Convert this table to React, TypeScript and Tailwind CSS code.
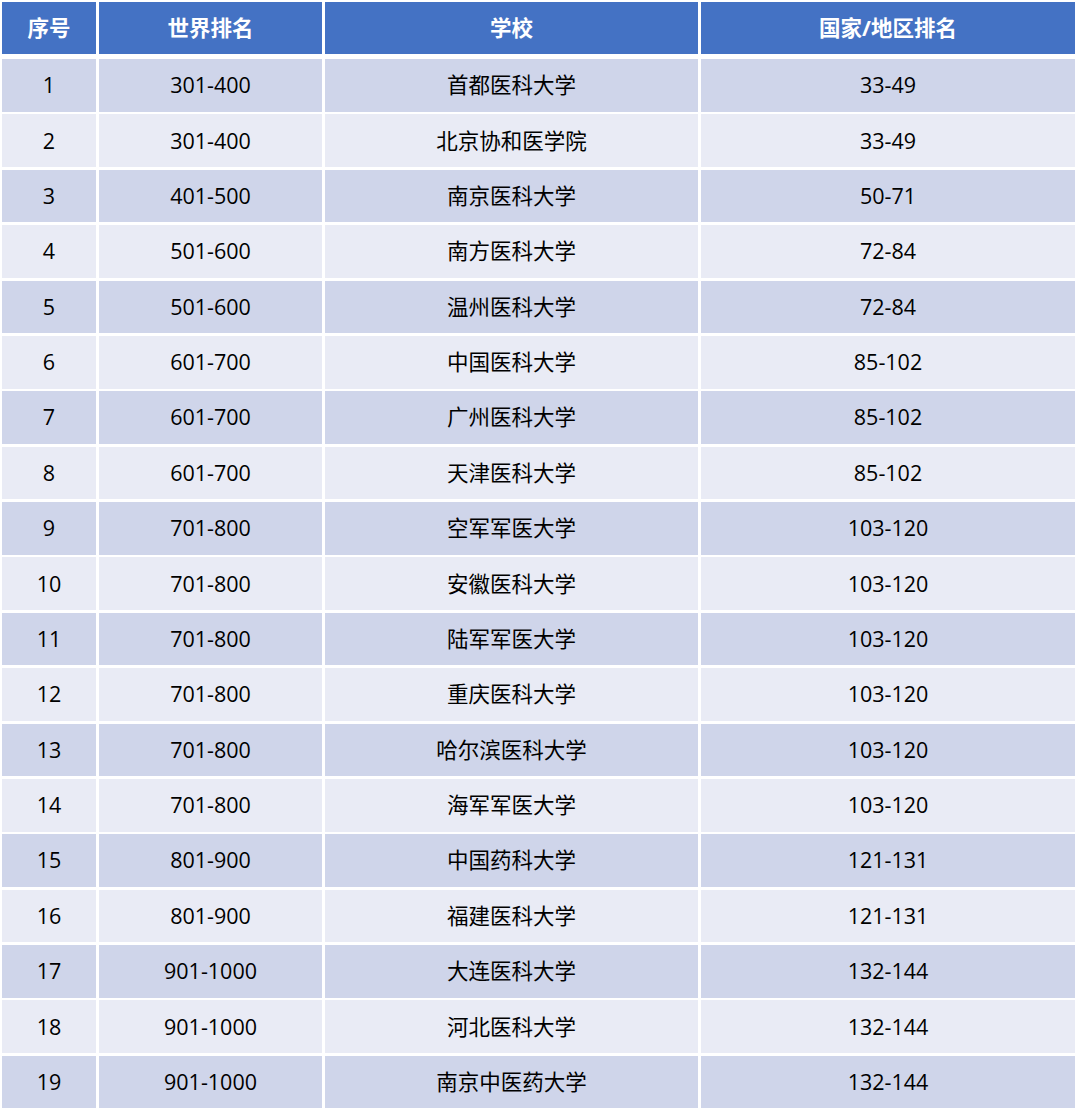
const rows: [string, string, string, string][] = [
  ['1', '301-400', '首都医科大学', '33-49'],
  ['2', '301-400', '北京协和医学院', '33-49'],
  ['3', '401-500', '南京医科大学', '50-71'],
  ['4', '501-600', '南方医科大学', '72-84'],
  ['5', '501-600', '温州医科大学', '72-84'],
  ['6', '601-700', '中国医科大学', '85-102'],
  ['7', '601-700', '广州医科大学', '85-102'],
  ['8', '601-700', '天津医科大学', '85-102'],
  ['9', '701-800', '空军军医大学', '103-120'],
  ['10', '701-800', '安徽医科大学', '103-120'],
  ['11', '701-800', '陆军军医大学', '103-120'],
  ['12', '701-800', '重庆医科大学', '103-120'],
  ['13', '701-800', '哈尔滨医科大学', '103-120'],
  ['14', '701-800', '海军军医大学', '103-120'],
  ['15', '801-900', '中国药科大学', '121-131'],
  ['16', '801-900', '福建医科大学', '121-131'],
  ['17', '901-1000', '大连医科大学', '132-144'],
  ['18', '901-1000', '河北医科大学', '132-144'],
  ['19', '901-1000', '南京中医药大学', '132-144'],
]

const headers = ['序号', '世界排名', '学校', '国家/地区排名']

// column widths taken from the screenshot
const cols = 'grid grid-cols-[94px_223px_373px_374px] gap-x-[3px]'

export default function App() {
  return (
    <div
      className="h-[1111px] w-[1080px] bg-white pl-[2px] pt-[2px] text-[21.5px] text-black"
      style={{ fontFamily: '"Open Sans", "Noto Sans CJK SC", sans-serif' }}
    >
      {/* header */}
      <div className={`${cols} h-[52px]`}>
        {headers.map((h) => (
          <div key={h} className="flex items-center justify-center bg-[#4472c4] font-bold text-white">
            {h}
          </div>
        ))}
      </div>

      {/* body */}
      <div className="mt-[5px] flex flex-col gap-y-[2.7px]">
        {rows.map((r, i) => (
          <div key={r[0]} className={`${cols} h-[52.7px]`}>
            {r.map((c, j) => (
              <div
                key={j}
                className={`flex items-center justify-center ${i % 2 === 0 ? 'bg-[#cfd5ea]' : 'bg-[#e9ebf5]'}`}
              >
                {c}
              </div>
            ))}
          </div>
        ))}
      </div>
    </div>
  )
}
